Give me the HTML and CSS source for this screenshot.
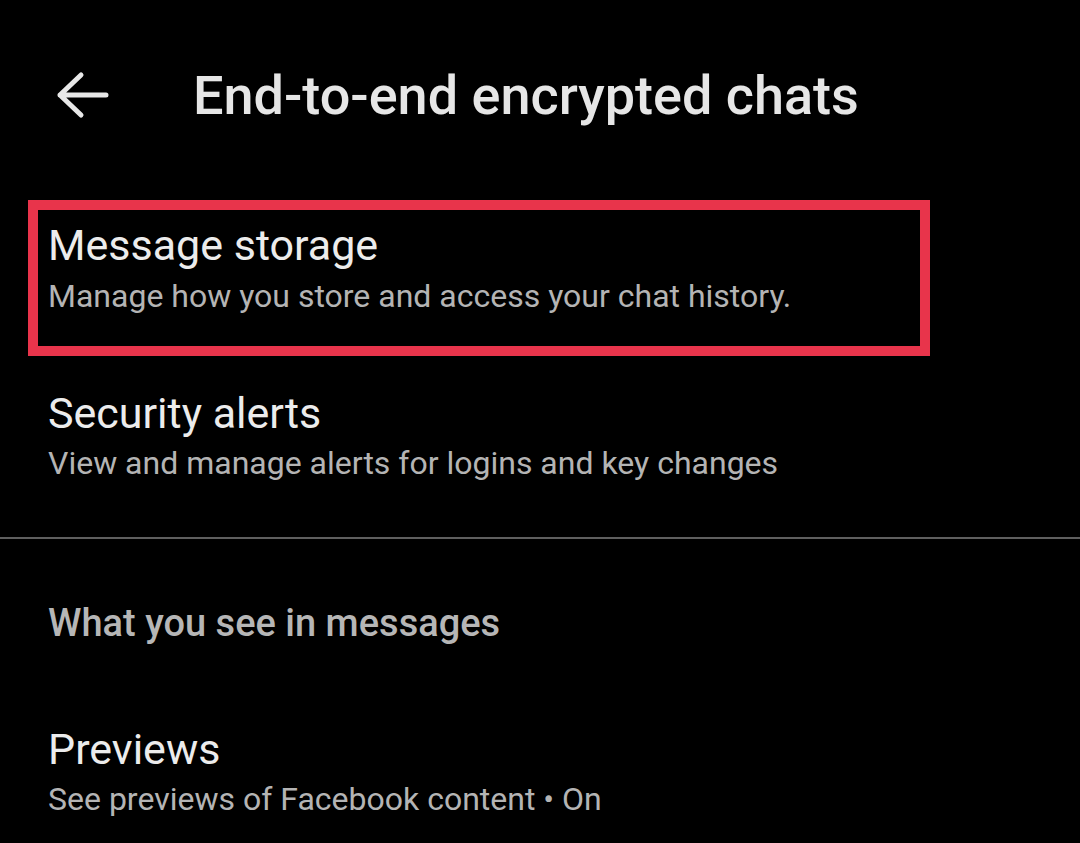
FILE: index.html
```html
<!DOCTYPE html>
<html lang="en">
<head>
    <meta charset="UTF-8">
    <meta name="viewport" content="width=device-width, initial-scale=1.0">
    <title>End-to-end encrypted chats</title>
    <link rel="stylesheet" href="styles.css">
</head>
<body>

    <div class="screen">
        <!-- Top bar -->
        <div class="topBar">
            <button class="backButton" aria-label="Back">
                <svg width="54" height="48" viewBox="0 0 54 48">
                    <path d="M26 4 L5 24 L26 44 M5 24 H51" fill="none" stroke="#e8e8e8" stroke-width="5" stroke-linecap="round" stroke-linejoin="round"/>
                </svg>
            </button>
            <h1>End-to-end encrypted chats</h1>
        </div>

        <!-- Settings rows -->
        <div class="row highlighted">
            <div class="rowTitle">Message storage</div>
            <div class="rowSub">Manage how you store and access your chat history.</div>
        </div>

        <div class="row security">
            <div class="rowTitle">Security alerts</div>
            <div class="rowSub">View and manage alerts for logins and key changes</div>
        </div>

        <div class="divider"></div>

        <div class="sectionHeader">What you see in messages</div>

        <div class="row previews">
            <div class="rowTitle">Previews</div>
            <div class="rowSub">See previews of Facebook content • On</div>
        </div>
    </div>

</body>
</html>
```

FILE: styles.css
```css
body {
    margin: 0;
    padding: 0;
    background-color: #000000;
    font-family: 'Roboto', 'Noto Sans', sans-serif;
    color: #ececec;
}

.screen {
    width: 1080px;
    height: 843px;
    overflow: hidden;
}

.topBar {
    display: flex;
    align-items: center;
    height: 190px;
    padding-left: 55px;
}

.backButton {
    background: none;
    border: none;
    padding: 0;
    margin-right: 84px;
    display: flex;
}

h1 {
    margin: 0;
    font-size: 54px;
    font-weight: 500;
    color: #e6e6e6;
}

.row {
    padding-left: 48px;
}

.rowTitle {
    font-size: 43px;
    line-height: 50px;
    color: #ececec;
}

.rowSub {
    font-size: 32px;
    line-height: 50px;
    color: #b4b4b4;
}

/* red outline around the first row */
.row.highlighted {
    margin: 10px 0 0 28px;
    width: 872px;
    height: 126px;
    padding: 10px 0 0 10px;
    box-sizing: content-box;
    border: 10px solid #e8344b;
}

.row.highlighted .rowSub {
    line-height: 52px;
}

.row.security {
    padding-top: 32px;
    padding-bottom: 49px;
}

.divider {
    height: 2px;
    background-color: #5f5f5f;
}

.sectionHeader {
    margin-top: 59px;
    padding-left: 48px;
    font-size: 38px;
    line-height: 50px;
    font-weight: 500;
    color: #b6b6b6;
}

.row.previews {
    padding-top: 76px;
}
```
